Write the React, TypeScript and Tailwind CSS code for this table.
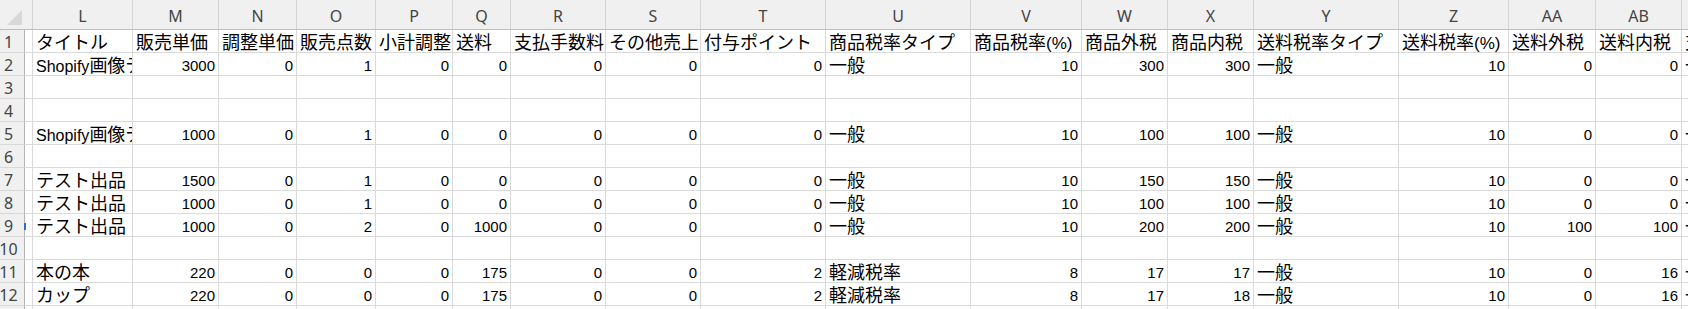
import React from 'react';

type Cell = string | number | null;

const letters = ['L', 'M', 'N', 'O', 'P', 'Q', 'R', 'S', 'T', 'U', 'V', 'W', 'X', 'Y', 'Z', 'AA', 'AB', 'AC'];

const headerRow: Cell[] = [
  'タイトル',
  '販売単価',
  '調整単価',
  '販売点数',
  '小計調整',
  '送料',
  '支払手数料',
  'その他売上',
  '付与ポイント',
  '商品税率タイプ',
  '商品税率(%)',
  '商品外税',
  '商品内税',
  '送料税率タイプ',
  '送料税率(%)',
  '送料外税',
  '送料内税',
  '支払合計',
];

const rows: Cell[][] = [
  headerRow,
  ['Shopify画像テスト', 3000, 0, 1, 0, 0, 0, 0, 0, '一般', 10, 300, 300, '一般', 10, 0, 0, '一般'],
  [],
  [],
  ['Shopify画像テスト', 1000, 0, 1, 0, 0, 0, 0, 0, '一般', 10, 100, 100, '一般', 10, 0, 0, '一般'],
  [],
  ['テスト出品', 1500, 0, 1, 0, 0, 0, 0, 0, '一般', 10, 150, 150, '一般', 10, 0, 0, '一般'],
  ['テスト出品', 1000, 0, 1, 0, 0, 0, 0, 0, '一般', 10, 100, 100, '一般', 10, 0, 0, '一般'],
  ['テスト出品', 1000, 0, 2, 0, 1000, 0, 0, 0, '一般', 10, 200, 200, '一般', 10, 100, 100, '一般'],
  [],
  ['本の本', 220, 0, 0, 0, 175, 0, 0, 2, '軽減税率', 8, 17, 17, '一般', 10, 0, 16, '一般'],
  ['カップ', 220, 0, 0, 0, 175, 0, 0, 2, '軽減税率', 8, 17, 18, '一般', 10, 0, 16, '一般'],
  [],
];

const gridCols =
  'grid grid-cols-[25px_8px_100px_86px_78px_79px_77px_58px_95px_95px_125px_145px_111px_86px_86px_145px_110px_87px_86px_60px]';

const CJK = /[\u3000-\u9fff\uff00-\uffef]/;

// CJK runs are drawn larger than latin runs, like Yu Gothic in Excel
function Runs({ text }: { text: string }) {
  const parts = text.match(/[\u3000-\u9fff\uff00-\uffef]+|[()%]+|[^\u3000-\u9fff\uff00-\uffef()%]+/g) ?? [];
  return (
    <span className="whitespace-nowrap leading-none">
      {parts.map((part, i) => {
        if (CJK.test(part)) {
          return (
            <span key={i} className="font-['Noto_Sans_CJK_JP',sans-serif] text-[18px]">
              {part}
            </span>
          );
        }
        if (/^[()%]+$/.test(part)) {
          return (
            <span key={i} className="font-['Liberation_Sans',sans-serif] text-[17px]">
              {part}
            </span>
          );
        }
        return (
          <span key={i} className="font-['Liberation_Sans',sans-serif] text-[16px]">
            {part}
          </span>
        );
      })}
    </span>
  );
}

function DataCell({ value }: { value: Cell }) {
  if (value === null || value === undefined) {
    return <div className="h-[23px] border-r border-b border-[#dadada]" />;
  }
  if (typeof value === 'number') {
    return (
      <div className="flex h-[23px] items-center justify-end overflow-hidden border-r border-b border-[#dadada] pr-[3px] pt-[2px] text-black">
        <span className="font-['Liberation_Sans',sans-serif] text-[15px] leading-none">{value}</span>
      </div>
    );
  }
  return (
    <div className="flex h-[23px] items-center overflow-hidden border-r border-b border-[#dadada] pl-[3px] pt-[1px] text-black">
      <Runs text={value} />
    </div>
  );
}

export default function App() {
  return (
    <div className="relative h-[309px] w-[1688px] overflow-hidden bg-white">
      <div className={`${gridCols} h-[30px] bg-[#f0f0f0]`}>
        <div className="col-span-2 flex h-[30px] items-start border-r border-b border-[#bdbdbd] border-r-[#d4d4d4]">
          <svg width="25" height="29" viewBox="0 0 25 29">
            <polygon points="22,10 22,25 7,25" fill="#d8d8d8" />
          </svg>
        </div>
        {letters.map((letter) => (
          <div
            key={letter}
            className="flex h-[30px] items-center justify-center border-r border-b border-r-[#d4d4d4] border-b-[#bdbdbd] pt-[3px] font-['Noto_Sans',sans-serif] text-[16px] text-[#444444]"
          >
            {letter}
          </div>
        ))}
      </div>

      {rows.map((row, r) => (
        <div key={r} className={gridCols}>
          <div className="flex h-[23px] items-center justify-center border-r border-b border-r-[#b4b4b4] border-b-[#d8d8d8] bg-[#f0f0f0] pr-[7px] pt-[2px] font-['Noto_Sans',sans-serif] text-[16px] leading-none text-[#444444]">
            {r + 1}
          </div>
          <div className="h-[23px] border-r border-b border-[#dadada]" />
          {letters.map((letter, c) => (
            <DataCell key={letter} value={row[c] ?? null} />
          ))}
        </div>
      ))}

      <div className="absolute top-[223px] left-[24px] h-[7px] w-[2px] bg-[#2a6fc9]" />
    </div>
  );
}
